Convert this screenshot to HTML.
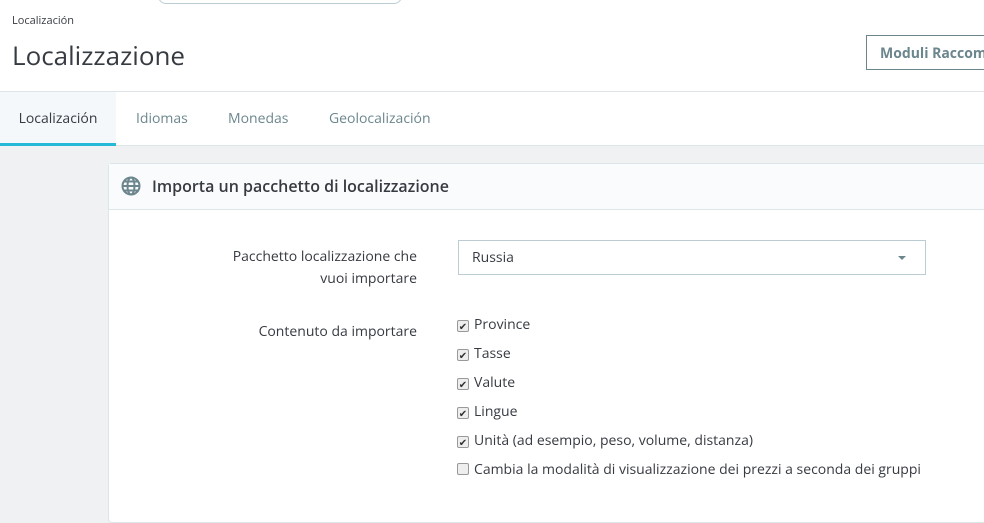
<!DOCTYPE html>
<html><head><style>
*{margin:0;padding:0;box-sizing:border-box}
body{width:984px;height:504px;overflow:hidden;background:#eff1f2;font-family:"Open Sans","Liberation Sans",sans-serif;color:#363a41;position:relative}
.top{position:absolute;left:0;top:0;width:984px;height:146px;background:#fff;border-bottom:1px solid #dbe6e9}
.search{position:absolute;left:158px;top:-12px;width:244px;height:16px;border:1px solid #bbcdd2;border-radius:10px}
.bc{position:absolute;left:12px;top:13px;font-size:11px}
h1{position:absolute;left:12px;top:37px;font-size:26px;font-weight:400;color:#363a41}
.btn{position:absolute;left:866px;top:35px;width:130px;height:35px;border:1px solid #6c868e;color:#6c868e;font-weight:700;font-size:14px;padding:8px 13px;white-space:nowrap}
.tabline{position:absolute;left:0;top:91px;width:984px;height:1px;background:#dfe5e7}
.tab{position:absolute;top:92px;height:54px;font-size:14px;color:#6c868e;padding-top:17px}
.tab.act{left:0;width:116px;background:#f4f8fb;color:#363a41;border-bottom:3px solid #25b9d7;text-align:center}
.card{position:absolute;left:108px;top:163px;width:900px;height:360px;background:#fff;border:1px solid #dbe6e9;border-radius:4px}
.ch{height:46px;background:#fafbfc;border-bottom:1px solid #dbe6e9;font-size:16px;font-weight:600;padding:11px 0 0 43px;position:relative}
.lbl{position:absolute;font-size:14px;text-align:right;right:590px;line-height:22px}
.sel{position:absolute;left:349px;top:76px;width:468px;height:35px;border:1px solid #bbcdd2;font-size:14px;padding:7px 13px}
.sel:after{content:"";position:absolute;right:19px;top:15px;border:4px solid transparent;border-top-color:#6c868e}
.cb{position:absolute;left:348px;font-size:14px;line-height:18px}
.cb span{display:inline-block;width:12px;height:12px;border:1px solid #999;border-radius:2px;background:#eee;margin-right:5px;vertical-align:-1px;position:relative;font-size:10px;line-height:10px;text-align:center;color:#333}
</style></head><body>
<div class="top">
<div class="search"></div>
<div class="bc">Localización</div>
<h1>Localizzazione</h1>
<div class="btn">Moduli Raccomandati</div>
<div class="tabline"></div>
<div class="tab act">Localización</div>
<div class="tab" style="left:136px">Idiomas</div>
<div class="tab" style="left:228px">Monedas</div>
<div class="tab" style="left:329px">Geolocalización</div>
</div>
<div class="card">
<div class="ch"><svg style="position:absolute;left:12px;top:12px" width="20" height="20" viewBox="0 0 20 20" fill="none" stroke="#6c868e" stroke-width="2"><circle cx="10" cy="10" r="8.5"/><ellipse cx="10" cy="10" rx="3.5" ry="8.5"/><path d="M1.5 10h17M3 5.5h14M3 14.5h14"/></svg>Importa un pacchetto di localizzazione</div>
<div class="lbl" style="top:82px">Pacchetto localizzazione che<br>vuoi importare</div>
<div class="sel">Russia</div>
<div class="lbl" style="top:157px">Contenuto da importare</div>
<div class="cb" style="top:152px"><span>✔</span>Province</div>
<div class="cb" style="top:181px"><span>✔</span>Tasse</div>
<div class="cb" style="top:210px"><span>✔</span>Valute</div>
<div class="cb" style="top:239px"><span>✔</span>Lingue</div>
<div class="cb" style="top:268px"><span>✔</span>Unità (ad esempio, peso, volume, distanza)</div>
<div class="cb" style="top:297px"><span></span>Cambia la modalità di visualizzazione dei prezzi a seconda dei gruppi</div>
</div>
</body></html>
